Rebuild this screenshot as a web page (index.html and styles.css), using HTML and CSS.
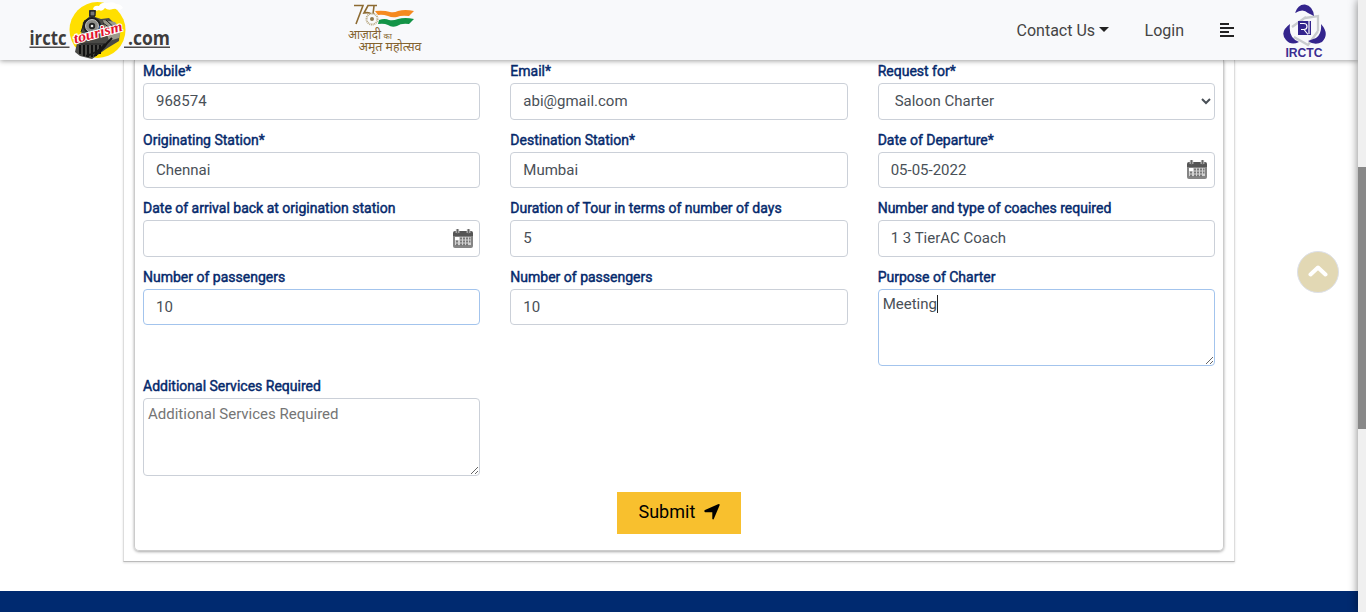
FILE: index.html
```html
<!DOCTYPE html>
<html lang="en">
<head>
<meta charset="utf-8">
<title>IRCTC Tourism - Charter</title>
<link rel="stylesheet" href="styles.css">
</head>
<body>
<svg class="defs" width="0" height="0" aria-hidden="true">
  <symbol id="calendar" viewBox="0 0 20 20">
    <path d="M0 4Q0 2 2 2H18Q20 2 20 4V7H0Z" fill="#555"/>
    <path d="M0 7H20V17Q20 19 18 19H2Q0 19 0 17Z" fill="#858585"/>
    <path d="M2 8H18V16H2Z" fill="#d2d2d2"/>
    <path d="M2 8H6V11H2Z" fill="#fff"/>
    <path d="M7 8.500h2v2h-2zM10 8.500h2v2h-2zM13 8.500h2v2h-2zM16 8.500h1.500v2h-1.500zM3 11.500h2v2H3zM7 11.500h2v2h-2zM10 11.500h2v2h-2zM13 11.500h2v2h-2zM16 11.500h1.500v2h-1.500zM3 14.500h2v2H3zM7 14.500h2v2h-2zM10 14.500h2v2h-2zM13 14.500h2v2h-2z" fill="#777"/>
    <path d="M4.500 0V4M15.500 0V4" stroke="#ddd" stroke-width="3.600"/>
    <path d="M4.500 .8V4M15.500 .8V4" stroke="#666" stroke-width="2" stroke-linecap="round"/>
  </symbol>
</svg>
<div class="page">
  <header class="topbar">
    <svg class="logo-tourism" width="150" height="60" viewBox="0 0 150 60">
      <circle cx="69.500" cy="30" r="28" fill="#ffdf00"/>
      <path d="M65 9q1-4 6-3 2-4 8-3 7-2 9 1 5 0 7 4l-3 2q-4-2-7-1-5 2-8-1-3 4-6 2-4 2-6-1z" fill="#fff"/>
      <path d="M61 10h7l-1 7 6 2 8-1 11 11-1 12-13 8-14 10-12-3-5-4 2-9 4-8 2-13 6-5z" fill="#4a4a46"/>
      <path d="M75 20l12 2 6 8-2 8-10 3z" fill="#9b9a8c"/>
      <circle cx="64" cy="26" r="9" fill="#1d1d1d"/>
      <circle cx="64" cy="26" r="6.500" fill="#8c8c88" stroke="#ddd" stroke-width=".8"/>
      <circle cx="64" cy="26" r="3.200" fill="#222"/>
      <circle cx="64" cy="26" r="1.300" fill="#eee"/>
      <path d="M62 11h5v5h-5z" fill="#777" stroke="#111"/>
      <path d="M57 20l-4 12M75 23l14 10M78 20l13 12M74 28l8 6M53 44h25" stroke="#222" fill="none"/>
      <path d="M52 45v9M56 45v11M60 45v12M64 45v12M68 45v11M72 45v9" stroke="#111" stroke-width="2"/>
      <path d="M66 56q9-6 13-13l5-5M58 56q12-3 19-12" stroke="#161616" stroke-width="2" fill="none"/>
      <text x="47" y="43.500" class="tourism-word" textLength="50" lengthAdjust="spacingAndGlyphs" transform="rotate(-15 47 43.500)">tourism</text>
      <text x="1.500" y="45" class="logo-word" textLength="37" lengthAdjust="spacingAndGlyphs">irctc</text>
      <text x="100" y="45" class="logo-word" textLength="42" lengthAdjust="spacingAndGlyphs">.com</text>
      <path d="M1.500 47.300h40M96 47.300h46" stroke="#4c4a4a" stroke-width="1.500"/>
    </svg>
    <svg class="logo-azadi" width="78" height="58" viewBox="0 0 78 58">
      <path d="M6 5.500h9L8 24M29 5.500H20L16 13q5-1 7 1M26 6l-1 8" fill="none" stroke="#8d6b32" stroke-width="1.600"/>
      <circle cx="24" cy="19" r="5.500" fill="#f8f9fb" stroke="#b9aa85" stroke-width="2" stroke-dasharray="1 .7"/>
      <circle cx="24" cy="19" r="2" fill="#8f7a50"/>
      <path d="M27 11q9-1 15 1 4 1 8-1 7-2 16 0l-5 5q-8-1-12 1-5 1-9-1-6-2-10-1z" fill="#f58a20"/>
      <path d="M31 20q6-2 10 0 4 1 9-1 7-2 16 0l-5 5q-8-1-12 2-5 2-9-1-4-2-10-1z" fill="#139447"/>
      <text x="0" y="38.500" class="azadi-word" textLength="33" lengthAdjust="spacingAndGlyphs">आज़ादी</text>
      <text x="35.500" y="38.500" class="azadi-small" textLength="8.500" lengthAdjust="spacingAndGlyphs">का</text>
      <text x="10.500" y="51" class="azadi-word" textLength="63" lengthAdjust="spacingAndGlyphs">अमृत महोत्सव</text>
    </svg>
    <nav class="nav">
      <a class="contact">Contact Us<span class="caret"></span></a>
      <a class="login">Login</a>
      <svg class="menu" width="14" height="14" viewBox="0 0 14 14"><path d="M0 1h9M0 5h14M0 9h9M0 13h14" stroke="#222" stroke-width="2"/></svg>
      <svg class="irctc" width="46" height="58" viewBox="0 0 46 58">
        <path d="M17 16L36 15 37 34 26 44 10 36 9 24Z" fill="#f8f9fb"/>
        <path d="M23 17L36 15 36 30M36 30L26 44 12 36M10 26L24 16" fill="none" stroke="#c9cccf" stroke-width="2.300"/>
        <path d="M13 12Q16 3 23 3.500 31 5 32 15L26 12Q21 7 13 12Z" fill="#34258d"/>
        <path d="M8 23Q-3 31 4 39 9 45 17 41Q6 37 8 23Z" fill="#34258d"/>
        <path d="M39 23Q48 33 40 41 33 45 26 40L34 37Q40 33 39 23Z" fill="#34258d"/>
        <path d="M16 20H29V34H16Z" fill="#34258d"/>
        <path d="M18 22.500h4q3 0 3 3t-3 3h-3M22 28.500l4 5M27 20v13" stroke="#fff" stroke-width="1.200" fill="none"/>
        <text x="3.500" y="56" class="irctc-word" textLength="37" lengthAdjust="spacingAndGlyphs">IRCTC</text>
      </svg>
    </nav>
  </header>
  <main class="outer">
    <form class="inner">
      <div class="grid">
        <label class="field"><span>Mobile*</span><input value="968574"></label>
        <label class="field"><span>Email*</span><input value="abi@gmail.com"></label>
        <label class="field"><span>Request for*</span><select><option>Saloon Charter</option></select></label>
        <label class="field"><span>Originating Station*</span><input value="Chennai"></label>
        <label class="field"><span>Destination Station*</span><input value="Mumbai"></label>
        <label class="field"><span>Date of Departure*</span><div class="date"><input value="05-05-2022"><svg class="cal" width="20" height="20"><use href="#calendar"/></svg></div></label>
        <label class="field"><span>Date of arrival back at origination station</span><div class="date"><input><svg class="cal" width="20" height="20"><use href="#calendar"/></svg></div></label>
        <label class="field"><span>Duration of Tour in terms of number of days</span><input value="5"></label>
        <label class="field"><span>Number and type of coaches required</span><input value="1 3 TierAC Coach"></label>
        <label class="field"><span>Number of passengers</span><input class="active" value="10"></label>
        <label class="field"><span>Number of passengers</span><input value="10"></label>
        <label class="field area"><span>Purpose of Charter</span><textarea class="active">Meeting</textarea><i class="cursor"></i></label>
        <label class="field"><span>Additional Services Required</span><textarea placeholder="Additional Services Required"></textarea></label>
      </div>
      <button class="submit" type="button">Submit <svg width="16" height="16" viewBox="0 0 16 16"><path d="M15 0Q16 0 15.500 1.500L10 14.500Q9.500 16 8.300 15V8.200H1Q-.5 7 1 6L14 .2Z" fill="#000"/></svg></button>
    </form>
  </main>
  <footer class="footer"></footer>
  <div class="edge"></div>
  <a class="to-top"><svg width="20" height="14" viewBox="0 0 20 14"><path d="M2.500 10.500L10 3.500l7.500 7" fill="none" stroke="#fff" stroke-width="4" stroke-linecap="round" stroke-linejoin="round"/></svg></a>
</div>
<div class="scroll"><div class="thumb"></div></div>
</body>
</html>
```
FILE: styles.css
```css
* { box-sizing: border-box; }
body { margin: 0; height: 612px; overflow: hidden; display: flex; background: #fff; font-family: Roboto, sans-serif; }
.defs { position: absolute; }
.page { position: relative; width: 1358px; height: 612px; display: flex; flex-direction: column; overflow: hidden; }
.topbar { position: relative; z-index: 2; flex: 0 0 60px; display: flex; align-items: flex-start; padding-left: 28px; background: #f8f9fb; box-shadow: 0 1px 5px rgba(0,0,0,.38); }
.logo-azadi { margin-left: 170px; }
.logo-word { font: bold 20px "Open Sans", sans-serif; fill: #3e3c3c; }
.tourism-word { font: italic bold 14.500px "Liberation Serif", serif; fill: #e3122d; stroke: #fff; stroke-width: 2px; paint-order: stroke; }
.azadi-word { font: 13px "Noto Sans", sans-serif; fill: #84632f; }
.azadi-small { font: 8px "Noto Sans", sans-serif; fill: #84632f; }
.irctc-word { font: bold 12px "Liberation Sans", sans-serif; fill: #3b2d91; }
.nav { flex: 1; display: flex; justify-content: flex-end; align-items: center; height: 60px; padding-right: 30px; font-size: 16px; font-weight: 400; color: #444; }
.nav a { line-height: 24px; padding-top: 1px; }
.contact { display: flex; align-items: center; margin-right: 35.500px; }
.caret { margin: -3px 0 0 4px; border: 5px solid transparent; border-top-color: #222; border-bottom: 0; }
.menu { margin: 0 48px 0 36px; }
.outer { width: 1112px; height: 501.500px; flex: none; margin-left: 123px; padding: 0 10px 10px; border: 1px solid #ddd; border-top: 0; border-bottom-color: #bbb; box-shadow: 0 1px 2px rgba(0,0,0,.12); }
.inner { height: 491px; display: flex; flex-direction: column; align-items: center; padding: 2.600px 8px 0; border: 1px solid #ccc; border-top: 0; border-radius: 0 0 5px 5px; box-shadow: 0 1px 3px rgba(0,0,0,.35); }
.grid { width: 1072px; display: grid; grid-template-columns: repeat(3, 1fr); gap: 11.600px 30px; align-items: start; }
.field { position: relative; display: flex; flex-direction: column; }
.field > span { height: 20.400px; padding-top: .5px; font-size: 14px; line-height: 17px; font-weight: 400; -webkit-text-stroke: .45px #05296c; color: #05296c; white-space: nowrap; }
input, select, textarea { display: block; width: 100%; margin: 0; border: 1px solid #cbd0d8; border-radius: 4px; background: #fff; color: #495057; font: 400 15px/21px Roboto, sans-serif; outline: 0; }
input, select { height: 36.550px; padding: 6px 12px; }
input { padding-bottom: 6.500px; }
textarea { height: 77.600px; padding: 4.400px 4px 4px; resize: vertical; }
textarea::placeholder { color: #757575; }
.active { border-color: #a3c4ed; }
.date { position: relative; }
.cal { position: absolute; right: 8px; top: 8.500px; }
.field:nth-child(7) .cal { right: 7px; }
.cursor { position: absolute; left: 59px; top: 27px; width: 1px; height: 18px; background: #222; }
.submit { display: flex; align-items: center; gap: 9px; width: 124px; height: 42px; margin-top: 16px; padding: 0 0 2px 21.500px; border: 0; background: #f8c02e; color: #000; font: 400 18px Roboto, sans-serif; }
.footer { flex: none; height: 21px; margin-top: 29.500px; background: #002a70; }
.edge { position: absolute; z-index: 3; inset: 0 -10px 0 auto; width: 10px; box-shadow: 0 0 10px rgba(0,0,0,.5); }
.to-top { position: absolute; left: 1297px; top: 251px; width: 42px; height: 42px; display: flex; align-items: center; justify-content: center; padding-bottom: 2px; border: 1px solid #dde0e8; border-radius: 50%; background: #e2d8b4; }
.scroll { width: 8px; height: 612px; padding-top: 167px; background: #f0f0f0; }
.thumb { height: 262px; background: #888; }
```
